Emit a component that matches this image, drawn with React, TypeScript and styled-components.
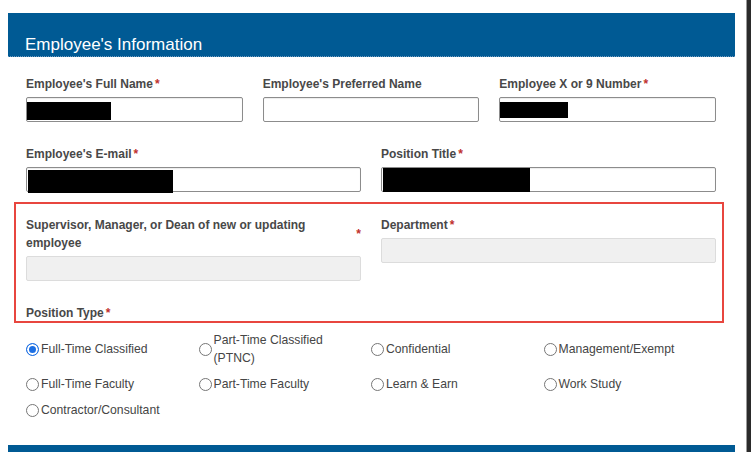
import React from "react";
import styled, { createGlobalStyle } from "styled-components";

const GlobalStyle = createGlobalStyle`
  html, body { margin: 0; padding: 0; background: #ffffff; }
  body { font-family: "Liberation Sans", Arial, sans-serif; }
  * { box-sizing: border-box; }
`;

const Page = styled.div`
  display: flex;
  height: 452px;
  overflow: hidden;
  padding-left: 8px;
  background: #ffffff;
`;

const Main = styled.div`
  width: 727px;
  padding-top: 13px;
  display: flex;
  flex-direction: column;
`;

const ScrollEdge = styled.div`
  margin-left: 11px;
  width: 5px;
  height: 100%;
  background: #2b2b2b;
  border-left: 1px solid #9a9a9a;
`;

const SectionHeader = styled.div<{ $gap?: number }>`
  flex: none;
  height: 44px;
  margin-top: ${(p) => p.$gap ?? 0}px;
  padding: 0 17px 1px;
  display: flex;
  align-items: flex-end;
  background: #005a94;
  border-bottom: 1px dotted #6f9cc0;
  color: #ffffff;
  font-size: 17px;
  line-height: 20px;
`;

const FormBody = styled.div`
  padding: 18px 19px 0 18px;
  display: flex;
  flex-direction: column;
`;

const Grid = styled.div<{ $cols: number; $top?: number }>`
  display: grid;
  grid-template-columns: repeat(${(p) => p.$cols}, 1fr);
  column-gap: 20px;
  align-items: start;
  margin-top: ${(p) => p.$top ?? 0}px;
`;

const Field = styled.div`
  display: flex;
  flex-direction: column;
  min-width: 0;
`;

const Label = styled.label<{ $lh?: number; $top?: number; $bottom?: number }>`
  display: flex;
  align-items: center;
  margin-top: ${(p) => p.$top ?? 0}px;
  margin-bottom: ${(p) => p.$bottom ?? 4}px;
  font-size: 12px;
  font-weight: bold;
  line-height: ${(p) => p.$lh ?? 18}px;
  color: #484848;
`;

const LabelText = styled.span`
  flex: 1;
`;

const Req = styled.span`
  color: #c0302c;
  font-weight: bold;
  margin-left: 2px;
`;

const InputBox = styled.div<{ $disabled?: boolean }>`
  height: 25px;
  display: flex;
  align-items: flex-start;
  border: 1px solid ${(p) => (p.$disabled ? "#dcdcdc" : "#8c8c8c")};
  border-radius: 2px;
  background: ${(p) => (p.$disabled ? "#f0f0f0" : "#ffffff")};
  box-shadow: ${(p) => (p.$disabled ? "none" : "inset 0 1px 1px rgba(0,0,0,0.08)")};
`;

const Redacted = styled.span<{ $w: number; $h: number; $top: number; $left: number }>`
  display: block;
  flex: none;
  width: ${(p) => p.$w}px;
  height: ${(p) => p.$h}px;
  margin-top: ${(p) => p.$top}px;
  margin-left: ${(p) => p.$left}px;
  background: #000000;
`;

const Highlight = styled.div`
  margin: 10px -8px 0 -12px;
  padding: 12px 6px 0 10px;
  border: 2px solid #e8463f;
`;

const RadioGrid = styled.div`
  display: grid;
  grid-template-columns: repeat(4, 1fr);
  row-gap: 8px;
  margin-top: 8px;
  align-items: center;
`;

const RadioItem = styled.label`
  display: flex;
  align-items: center;
  padding-right: 18px;
  font-size: 12.2px;
  line-height: 18px;
  color: #454545;
`;

const Radio = styled.input`
  appearance: none;
  -webkit-appearance: none;
  flex: none;
  width: 13px;
  height: 13px;
  margin: 0 2px 0 0;
  border: 1px solid #767676;
  border-radius: 50%;
  background: #ffffff;
  &:checked {
    border-color: #1c6fe3;
    background: #1c6fe3;
    box-shadow: inset 0 0 0 2px #ffffff;
  }
`;

const positionTypes = [
  "Full-Time Classified",
  "Part-Time Classified (PTNC)",
  "Confidential",
  "Management/Exempt",
  "Full-Time Faculty",
  "Part-Time Faculty",
  "Learn & Earn",
  "Work Study",
  "Contractor/Consultant",
];

export default function App() {
  return (
    <>
      <GlobalStyle />
      <Page>
        <Main>
          <SectionHeader>Employee's Information</SectionHeader>
          <FormBody>
            <Grid $cols={3}>
              <Field>
                <Label>
                  Employee's Full Name<Req>*</Req>
                </Label>
                <InputBox>
                  <Redacted $w={84} $h={18} $top={4} $left={0} />
                </InputBox>
              </Field>
              <Field>
                <Label>Employee's Preferred Name</Label>
                <InputBox />
              </Field>
              <Field>
                <Label>
                  Employee X or 9 Number<Req>*</Req>
                </Label>
                <InputBox>
                  <Redacted $w={68} $h={16} $top={4} $left={0} />
                </InputBox>
              </Field>
            </Grid>

            <Grid $cols={2} $top={23}>
              <Field>
                <Label>
                  Employee's E-mail<Req>*</Req>
                </Label>
                <InputBox>
                  <Redacted $w={145} $h={23} $top={2} $left={1} />
                </InputBox>
              </Field>
              <Field>
                <Label>
                  Position Title<Req>*</Req>
                </Label>
                <InputBox>
                  <Redacted $w={147} $h={24} $top={0} $left={1} />
                </InputBox>
              </Field>
            </Grid>

            <Highlight>
              <Grid $cols={2}>
                <Field>
                  <Label>
                    <LabelText>Supervisor, Manager, or Dean of new or updating employee</LabelText>
                    <Req>*</Req>
                  </Label>
                  <InputBox $disabled />
                </Field>
                <Field>
                  <Label>
                    Department<Req>*</Req>
                  </Label>
                  <InputBox $disabled />
                </Field>
              </Grid>
              <Label $lh={16} $top={24} $bottom={0}>
                Position Type<Req>*</Req>
              </Label>
            </Highlight>

            <RadioGrid>
              {positionTypes.map((t, i) => (
                <RadioItem key={t}>
                  <Radio type="radio" name="positionType" defaultChecked={i === 0} />
                  <span>{t}</span>
                </RadioItem>
              ))}
            </RadioGrid>
          </FormBody>
          <SectionHeader $gap={26} />
        </Main>
        <ScrollEdge />
      </Page>
    </>
  );
}
